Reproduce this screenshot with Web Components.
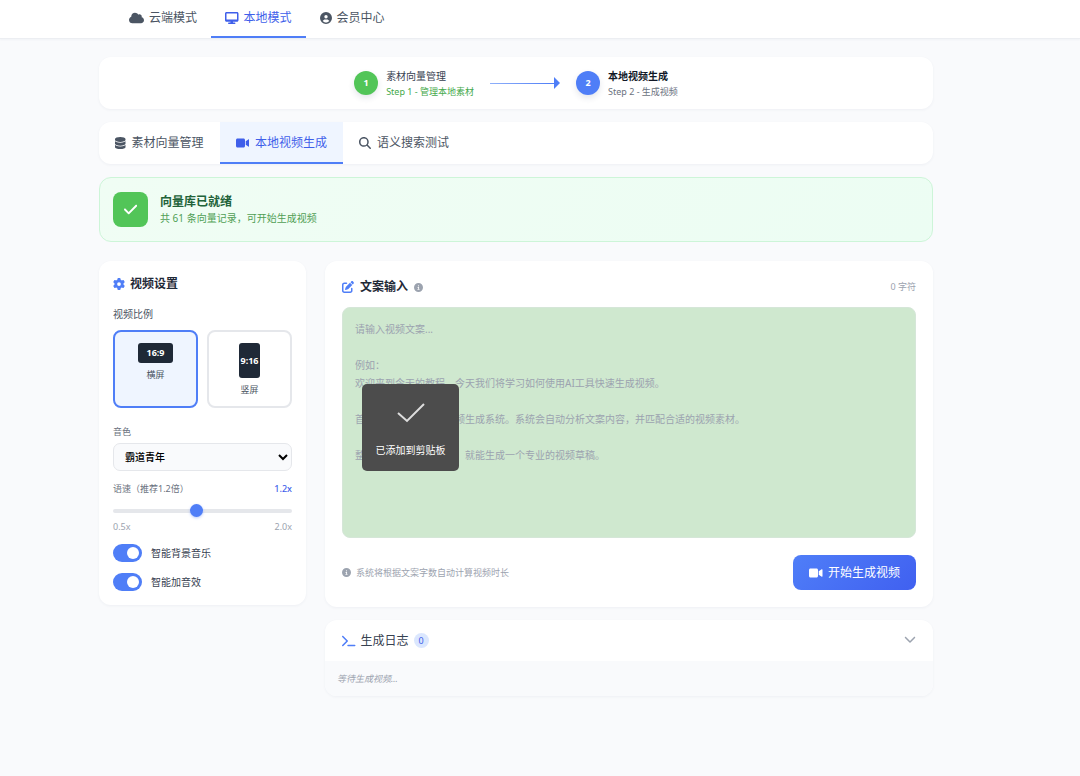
<!DOCTYPE html>
<html lang="zh-CN">
<head>
<meta charset="UTF-8">
<meta name="viewport" content="width=device-width, initial-scale=1.0">
<title>本地视频生成</title>
<style>
  :root {
    --blue: #4f7ef7;
    --blue-dark: #3f5fea;
    --green: #52c558;
    --ink: #1f2937;
    --text: #4b5563;
    --muted: #6b7280;
    --faint: #9ca3af;
    --line: #e5e7eb;
    --soft: #f9fafc;
  }
  body {
    margin: 0;
    min-height: 100vh;
    background: var(--soft);
    color: var(--text);
    font-family: "Noto Sans", "Noto Sans CJK SC", sans-serif;
    font-size: 12px;
    line-height: 18px;
  }
  main {
    display: flex;
    flex-direction: column;
    gap: 13px;
    padding: 18px 147px 40px 99px;
  }
  .workspace {
    display: grid;
    grid-template-columns: 207px 1fr;
    gap: 19px;
    align-items: start;
    margin-top: 6px;
  }
  .column {
    display: flex;
    flex-direction: column;
    gap: 13px;
  }
</style>
</head>
<body>
<top-nav>
  <nav-link icon="cloud">云端模式</nav-link>
  <nav-link icon="desktop" active>本地模式</nav-link>
  <nav-link icon="user">会员中心</nav-link>
</top-nav>

<main>
  <step-flow>
    <step-item number="1" state="done" note="Step 1 - 管理本地素材">素材向量管理</step-item>
    <step-arrow></step-arrow>
    <step-item number="2" state="current" note="Step 2 - 生成视频">本地视频生成</step-item>
  </step-flow>

  <tab-bar>
    <tab-button icon="database">素材向量管理</tab-button>
    <tab-button icon="video" active>本地视频生成</tab-button>
    <tab-button icon="search">语义搜索测试</tab-button>
  </tab-bar>

  <status-banner heading="向量库已就绪">共 61 条向量记录，可开始生成视频</status-banner>

  <div class="workspace">
    <video-settings></video-settings>
    <div class="column">
      <script-editor>
        <copy-toast slot="toast">已添加到剪贴板</copy-toast>
      </script-editor>
      <log-panel heading="生成日志" count="0">等待生成视频...</log-panel>
    </div>
  </div>
</main>

<script>
  const ICONS = {
    cloud: [640, 'M0 336c0 79.5 64.5 144 144 144H512c70.7 0 128-57.3 128-128c0-61.9-44-113.6-102.4-125.4c4.1-10.7 6.4-22.4 6.4-34.6c0-53-43-96-96-96c-19.7 0-38.1 6-53.3 16.2C367 64.2 315.3 32 256 32C167.6 32 96 103.6 96 192c0 2.7 .1 5.4 .2 8.1C40.2 219.8 0 273.2 0 336z'],
    desktop: [576, 'M64 0C28.7 0 0 28.7 0 64V352c0 35.3 28.7 64 64 64H240l-10.7 32H160c-17.7 0-32 14.3-32 32s14.3 32 32 32H416c17.7 0 32-14.3 32-32s-14.3-32-32-32H346.7L336 416H512c35.3 0 64-28.7 64-64V64c0-35.3-28.7-64-64-64H64zM512 64V320H64V64H512z'],
    user: [512, 'M399 384.2C376.9 345.8 335.4 320 288 320H224c-47.4 0-88.9 25.8-111 64.2c35.2 39.2 86.2 63.8 143 63.8s107.8-24.7 143-63.8zM0 256a256 256 0 1 1 512 0A256 256 0 1 1 0 256zm256 16a72 72 0 1 0 0-144 72 72 0 1 0 0 144z'],
    database: [448, 'M448 80v48c0 44.2-100.3 80-224 80S0 172.2 0 128V80C0 35.8 100.3 0 224 0S448 35.8 448 80zM393.2 214.7c20.8-7.4 39.9-16.9 54.8-28.6V288c0 44.2-100.3 80-224 80S0 332.2 0 288V186.1c14.9 11.8 34 21.2 54.8 28.6C99.7 230.7 159.5 240 224 240s124.3-9.3 169.2-25.3zM0 346.1c14.9 11.8 34 21.2 54.8 28.6C99.7 390.7 159.5 400 224 400s124.3-9.3 169.2-25.3c20.8-7.4 39.9-16.9 54.8-28.6V432c0 44.2-100.3 80-224 80S0 476.2 0 432V346.1z'],
    video: [576, 'M0 128C0 92.7 28.7 64 64 64H320c35.3 0 64 28.7 64 64V384c0 35.3-28.7 64-64 64H64c-35.3 0-64-28.7-64-64V128zM559.1 99.8c10.4 5.6 16.9 16.4 16.9 28.2V384c0 11.8-6.5 22.6-16.9 28.2s-23 5-32.9-1.6l-96-64L416 337.1V320 192 174.9l14.2-9.5 96-64c9.8-6.5 22.4-7.2 32.9-1.6z'],
    search: [512, 'M416 208c0 45.9-14.9 88.3-40 122.7L502.6 457.4c12.5 12.5 12.5 32.8 0 45.3s-32.8 12.5-45.3 0L330.7 376c-34.4 25.2-76.8 40-122.7 40C93.1 416 0 322.9 0 208S93.1 0 208 0S416 93.1 416 208zM208 352a144 144 0 1 0 0-288 144 144 0 1 0 0 288z'],
    check: [448, 'M438.6 105.4c12.5 12.5 12.5 32.8 0 45.3l-256 256c-12.5 12.5-32.8 12.5-45.3 0l-128-128c-12.5-12.5-12.5-32.8 0-45.3s32.8-12.5 45.3 0L160 338.7 393.4 105.4c12.5-12.5 32.8-12.5 45.3 0z'],
    gear: [512, 'M495.9 166.6c3.2 8.7 .5 18.4-6.4 24.6l-43.3 39.4c1.1 8.3 1.7 16.8 1.7 25.4s-.6 17.1-1.7 25.4l43.3 39.4c6.9 6.2 9.6 15.9 6.4 24.6c-4.4 11.9-9.7 23.3-15.8 34.3l-4.7 8.1c-6.6 11-14 21.4-22.1 31.2c-5.9 7.2-15.7 9.6-24.5 6.8l-55.7-17.7c-13.4 10.3-28.2 18.9-44 25.4l-12.5 57.1c-2 9.1-9 16.3-18.2 17.8c-13.8 2.3-28 3.5-42.5 3.5s-28.7-1.2-42.5-3.5c-9.2-1.5-16.2-8.7-18.2-17.8l-12.5-57.1c-15.8-6.5-30.6-15.1-44-25.4L83.1 425.9c-8.8 2.8-18.6 .3-24.5-6.8c-8.1-9.8-15.5-20.2-22.1-31.2l-4.7-8.1c-6.1-11-11.4-22.4-15.8-34.3c-3.2-8.7-.5-18.4 6.4-24.6l43.3-39.4C64.6 273.1 64 264.6 64 256s.6-17.1 1.7-25.4L22.4 191.2c-6.9-6.2-9.6-15.9-6.4-24.6c4.4-11.9 9.7-23.3 15.8-34.3l4.7-8.1c6.6-11 14-21.4 22.1-31.2c5.9-7.2 15.7-9.6 24.5-6.8l55.7 17.7c13.4-10.3 28.2-18.9 44-25.4l12.5-57.1c2-9.1 9-16.3 18.2-17.8C227.3 1.2 241.5 0 256 0s28.7 1.2 42.5 3.5c9.2 1.5 16.2 8.7 18.2 17.8l12.5 57.1c15.8 6.5 30.6 15.1 44 25.4l55.7-17.7c8.8-2.8 18.6-.3 24.5 6.8c8.1 9.8 15.5 20.2 22.1 31.2l4.7 8.1c6.1 11 11.4 22.4 15.8 34.3zM256 336a80 80 0 1 0 0-160 80 80 0 1 0 0 160z'],
    edit: [512, 'M471.6 21.7c-21.9-21.9-57.3-21.9-79.2 0L362.3 51.7l97.9 97.9 30.1-30.1c21.9-21.9 21.9-57.3 0-79.2L471.6 21.7zm-299.2 220c-6.1 6.1-10.8 13.6-13.5 21.9l-29.6 88.8c-2.9 8.6-.6 18.1 5.8 24.6s15.9 8.7 24.6 5.8l88.8-29.6c8.2-2.7 15.7-7.4 21.9-13.5L437.7 172.3 339.7 74.3 172.4 241.7zM96 64C43 64 0 107 0 160V416c0 53 43 96 96 96H352c53 0 96-43 96-96V320c0-17.7-14.3-32-32-32s-32 14.3-32 32v96c0 17.7-14.3 32-32 32H96c-17.7 0-32-14.3-32-32V160c0-17.7 14.3-32 32-32h96c17.7 0 32-14.3 32-32s-14.3-32-32-32H96z'],
    info: [512, 'M256 512A256 256 0 1 0 256 0a256 256 0 1 0 0 512zM216 336h24V272H216c-13.3 0-24-10.7-24-24s10.7-24 24-24h48c13.3 0 24 10.7 24 24v88h8c13.3 0 24 10.7 24 24s-10.7 24-24 24H216c-13.3 0-24-10.7-24-24s10.7-24 24-24zm40-208a32 32 0 1 1 0 64 32 32 0 1 1 0-64z'],
    terminal: [576, 'M9.4 86.6C-3.1 74.1-3.1 53.9 9.4 41.4s32.8-12.5 45.3 0l192 192c12.5 12.5 12.5 32.8 0 45.3l-192 192c-12.5 12.5-32.8 12.5-45.3 0s-12.5-32.8 0-45.3L178.7 256 9.4 86.6zM256 416H544c17.7 0 32 14.3 32 32s-14.3 32-32 32H256c-17.7 0-32-14.3-32-32s14.3-32 32-32z'],
    chevron: [512, 'M233.4 406.6c12.5 12.5 32.8 12.5 45.3 0l192-192c12.5-12.5 12.5-32.8 0-45.3s-32.8-12.5-45.3 0L256 338.7 86.6 169.4c-12.5-12.5-32.8-12.5-45.3 0s-12.5 32.8 0 45.3l192 192z']
  };

  // Shared white card look
  const CARD = `
    display: block;
    background: #fff;
    border-radius: 12px;
    box-shadow: 0 1px 3px rgba(30, 50, 90, 0.05);
  `;

  class BaseElement extends HTMLElement {
    constructor() {
      super();
      this.attachShadow({ mode: 'open' });
    }

    connectedCallback() {
      this.shadowRoot.innerHTML = this.render();
    }
  }

  class AppIcon extends BaseElement {
    render() {
      const [width, path] = ICONS[this.getAttribute('name')];
      return `
        <style>
          :host { display: inline-flex; flex: none; }
          svg { display: block; height: var(--icon-size, 12px); width: auto; fill: currentColor; }
        </style>
        <svg viewBox="0 0 ${width} 512" aria-hidden="true"><path d="${path}"/></svg>
      `;
    }
  }

  class TopNav extends BaseElement {
    render() {
      return `
        <style>
          :host {
            display: block;
            background: #fff;
            border-bottom: 1px solid #eceef2;
            box-shadow: 0 1px 2px rgba(30, 50, 90, 0.04);
          }
          nav { display: flex; padding: 0 115px; }
        </style>
        <nav><slot></slot></nav>
      `;
    }
  }

  class NavLink extends BaseElement {
    render() {
      return `
        <style>
          :host { display: block; }
          a {
            display: flex;
            align-items: center;
            gap: 5px;
            height: 36px;
            padding: 0 14px;
            border-bottom: 2px solid transparent;
            color: var(--text);
            text-decoration: none;
          }
          :host([active]) a { color: var(--blue-dark); border-color: var(--blue); }
        </style>
        <a href="#"><app-icon name="${this.getAttribute('icon')}"></app-icon><slot></slot></a>
      `;
    }
  }

  class StepFlow extends BaseElement {
    render() {
      return `
        <style>
          :host { ${CARD} }
          div {
            display: flex;
            justify-content: center;
            align-items: center;
            gap: 16px;
            padding: 10px;
          }
        </style>
        <div><slot></slot></div>
      `;
    }
  }

  class StepItem extends BaseElement {
    render() {
      return `
        <style>
          :host { display: flex; align-items: center; gap: 8px; }
          .circle {
            width: 24px;
            height: 24px;
            border-radius: 50%;
            background: var(--blue);
            box-shadow: 0 3px 6px rgba(30, 50, 90, 0.12);
            color: #fff;
            font-size: 9px;
            font-weight: 700;
            line-height: 24px;
            text-align: center;
          }
          .words { padding-top: 2px; }
          .title { color: #374151; font-size: 10px; line-height: 15px; }
          .note { color: var(--muted); font-size: 9px; line-height: 15px; }
          :host([state="done"]) .circle { background: var(--green); }
          :host([state="done"]) .note { color: #45a94b; }
          :host([state="current"]) .title { color: #111827; font-weight: 700; }
        </style>
        <div class="circle">${this.getAttribute('number')}</div>
        <div class="words">
          <div class="title"><slot></slot></div>
          <div class="note">${this.getAttribute('note')}</div>
        </div>
      `;
    }
  }

  class StepArrow extends BaseElement {
    render() {
      return `
        <style>
          :host { display: flex; align-items: center; width: 70px; }
          .line { flex: 1; height: 1px; background: linear-gradient(90deg, #8fb0fa, var(--blue)); }
          .head {
            border: 6px solid transparent;
            border-left-color: var(--blue);
            border-right-width: 0;
          }
        </style>
        <div class="line"></div>
        <div class="head"></div>
      `;
    }
  }

  class TabBar extends BaseElement {
    render() {
      return `
        <style>
          :host { ${CARD} overflow: hidden; }
          div { display: flex; }
        </style>
        <div><slot></slot></div>
      `;
    }
  }

  class TabButton extends BaseElement {
    render() {
      return `
        <style>
          :host { display: block; }
          button {
            display: flex;
            align-items: center;
            gap: 6px;
            height: 42px;
            padding: 2px 16px 0;
            border: 0;
            border-bottom: 2px solid transparent;
            background: none;
            color: var(--text);
            font: inherit;
          }
          :host([active]) button {
            background: #eff5ff;
            border-color: var(--blue);
            color: var(--blue-dark);
          }
        </style>
        <button type="button"><app-icon name="${this.getAttribute('icon')}"></app-icon><slot></slot></button>
      `;
    }
  }

  class StatusBanner extends BaseElement {
    render() {
      return `
        <style>
          :host {
            display: flex;
            align-items: center;
            gap: 12px;
            padding: 14px 13px;
            border: 1px solid #cdf5d8;
            border-radius: 12px;
            background: linear-gradient(135deg, #f0fdf4, #ecfdf3);
          }
          .badge {
            display: grid;
            place-items: center;
            width: 35px;
            height: 35px;
            border-radius: 8px;
            background: var(--green);
            color: #fff;
            --icon-size: 15px;
          }
          .heading { color: #22633a; font-weight: 700; line-height: 16px; }
          .note { color: #4f9f55; font-size: 10px; line-height: 16px; }
        </style>
        <div class="badge"><app-icon name="check"></app-icon></div>
        <div>
          <div class="heading">${this.getAttribute('heading')}</div>
          <div class="note"><slot></slot></div>
        </div>
      `;
    }
  }

  class RatioOption extends BaseElement {
    render() {
      const checked = this.hasAttribute('checked') ? 'checked' : '';
      return `
        <style>
          :host { display: block; }
          label {
            display: flex;
            flex-direction: column;
            align-items: center;
            gap: 5px;
            box-sizing: border-box;
            height: 100%;
            padding: 11px 0 9px;
            border: 2px solid var(--line);
            border-radius: 8px;
            background: #fff;
            font-size: 9px;
            line-height: 14px;
          }
          label:has(:checked) { border-color: var(--blue); background: #eff5ff; }
          input { position: absolute; opacity: 0; pointer-events: none; }
          .preview {
            display: grid;
            place-items: center;
            width: 35px;
            height: 20px;
            border-radius: 3px;
            background: var(--ink);
            color: #fff;
            font-weight: 700;
          }
          :host([shape="tall"]) .preview { width: 21px; height: 35px; }
        </style>
        <label>
          <input type="radio" name="ratio" ${checked}>
          <span class="preview">${this.getAttribute('ratio')}</span>
          <slot></slot>
        </label>
      `;
    }
  }

  class SpeedSlider extends BaseElement {
    render() {
      return `
        <style>
          :host { display: block; color: var(--muted); font-size: 9px; line-height: 16px; }
          .row { display: flex; justify-content: space-between; }
          output { color: var(--blue-dark); font-weight: 500; }
          input {
            display: block;
            width: 100%;
            height: 14px;
            margin: 7px 0 2px;
            appearance: none;
            background: none;
          }
          input::-webkit-slider-runnable-track {
            height: 4px;
            border-radius: 2px;
            background: var(--line);
          }
          input::-webkit-slider-thumb {
            appearance: none;
            width: 13px;
            height: 13px;
            margin-top: -5px;
            border-radius: 50%;
            background: var(--blue);
            box-shadow: 0 1px 3px rgba(79, 126, 247, 0.4);
          }
          .scale { color: var(--faint); line-height: 14px; }
        </style>
        <div class="row">
          <label for="speed"><slot></slot></label>
          <output for="speed">1.2x</output>
        </div>
        <input id="speed" type="range" min="0.5" max="2" step="0.1" value="1.2">
        <div class="row scale"><span>0.5x</span><span>2.0x</span></div>
      `;
    }
  }

  class SettingSwitch extends BaseElement {
    render() {
      return `
        <style>
          :host { display: block; }
          label {
            display: flex;
            align-items: center;
            gap: 9px;
            color: #374151;
            font-size: 10px;
          }
          input {
            appearance: none;
            display: flex;
            align-items: center;
            box-sizing: border-box;
            width: 29px;
            height: 18px;
            margin: 0;
            padding: 3px;
            border-radius: 9px;
            background: #d1d5db;
          }
          input::before {
            content: "";
            width: 12px;
            height: 12px;
            border-radius: 50%;
            background: #fff;
          }
          input:checked { justify-content: flex-end; background: var(--blue); }
        </style>
        <label><input type="checkbox" checked><slot></slot></label>
      `;
    }
  }

  class VideoSettings extends BaseElement {
    render() {
      return `
        <style>
          :host { ${CARD} padding: 14px; }
          h2 {
            display: flex;
            align-items: center;
            gap: 5px;
            margin: 0 0 13px;
            color: var(--ink);
            font-size: 12px;
          }
          h2 app-icon { color: var(--blue); }
          .label { display: block; line-height: 16px; }
          .ratio-label { margin-bottom: 8px; font-size: 10px; }
          .voice-label { margin-bottom: 3px; font-size: 9px; color: var(--muted); }
          .ratios {
            display: grid;
            grid-template-columns: 1fr 1fr;
            gap: 9px;
            margin-bottom: 16px;
          }
          select {
            display: block;
            width: 100%;
            height: 28px;
            margin-bottom: 10px;
            padding: 0 0 0 7px;
            border: 1px solid var(--line);
            border-radius: 7px;
            background-color: var(--soft);
            color: #000;
            font-family: inherit;
            font-size: 10px;
            font-weight: 500;
          }
          .switches {
            display: flex;
            flex-direction: column;
            gap: 11px;
            margin-top: 10px;
          }
        </style>
        <h2><app-icon name="gear"></app-icon>视频设置</h2>
        <div class="label ratio-label">视频比例</div>
        <div class="ratios">
          <ratio-option ratio="16:9" checked>横屏</ratio-option>
          <ratio-option ratio="9:16" shape="tall">竖屏</ratio-option>
        </div>
        <label class="label voice-label" for="voice">音色</label>
        <select id="voice"><option>霸道青年</option></select>
        <speed-slider>语速（推荐1.2倍）</speed-slider>
        <div class="switches">
          <setting-switch>智能背景音乐</setting-switch>
          <setting-switch>智能加音效</setting-switch>
        </div>
      `;
    }
  }

  class ScriptEditor extends BaseElement {
    render() {
      const placeholder = [
        '请输入视频文案...',
        '',
        '例如：',
        '欢迎来到今天的教程。今天我们将学习如何使用AI工具快速生成视频。',
        '',
        '首先，我们需要打开视频生成系统。系统会自动分析文案内容，并匹配合适的视频素材。',
        '',
        '整个过程只需要几分钟，就能生成一个专业的视频草稿。'
      ].join('&#10;');
      return `
        <style>
          :host { ${CARD} padding: 17px; }
          header, footer { display: flex; align-items: center; justify-content: space-between; }
          header { margin-bottom: 11px; }
          .title { display: flex; align-items: center; gap: 6px; color: var(--ink); font-weight: 700; }
          .title .edit { color: var(--blue); }
          .info { color: var(--faint); --icon-size: 9px; }
          .count, .hint { color: var(--faint); font-size: 9px; }
          .field { position: relative; margin-bottom: 17px; }
          textarea {
            display: block;
            box-sizing: border-box;
            width: 100%;
            height: 231px;
            padding: 12px;
            border: 1px solid #d5e6d8;
            border-radius: 8px;
            background: #cfe8cf;
            color: var(--ink);
            font-family: inherit;
            font-size: 10px;
            line-height: 18px;
            resize: none;
          }
          textarea::placeholder { color: var(--faint); }
          .hint { display: flex; align-items: center; gap: 5px; --icon-size: 9px; }
          button {
            display: flex;
            align-items: center;
            gap: 5px;
            height: 35px;
            padding: 0 16px;
            border: 0;
            border-radius: 8px;
            background: linear-gradient(135deg, #4f7ef8, #4060f0);
            color: #fff;
            font: inherit;
          }
        </style>
        <header>
          <label class="title" for="script">
            <app-icon class="edit" name="edit"></app-icon>文案输入
            <app-icon class="info" name="info"></app-icon>
          </label>
          <span class="count">0 字符</span>
        </header>
        <div class="field">
          <textarea id="script" placeholder="${placeholder}"></textarea>
          <slot name="toast"></slot>
        </div>
        <footer>
          <span class="hint"><app-icon name="info"></app-icon>系统将根据文案字数自动计算视频时长</span>
          <button type="button"><app-icon name="video"></app-icon>开始生成视频</button>
        </footer>
      `;
    }
  }

  class CopyToast extends BaseElement {
    render() {
      return `
        <style>
          :host {
            position: absolute;
            top: 77px;
            left: 20px;
            display: flex;
            flex-direction: column;
            align-items: center;
            gap: 18px;
            box-sizing: border-box;
            width: 97px;
            height: 87px;
            padding-top: 19px;
            border-radius: 5px;
            background: #4c4c4c;
            color: #fff;
            font-size: 10px;
          }
          svg { fill: none; stroke: #ddd; stroke-width: 2; }
        </style>
        <svg width="28" height="20" viewBox="0 0 28 20" aria-hidden="true"><path d="M1 10l9 8L27 1"/></svg>
        <slot></slot>
      `;
    }
  }

  class LogPanel extends BaseElement {
    render() {
      return `
        <style>
          :host { ${CARD} overflow: hidden; }
          header { display: flex; align-items: center; gap: 5px; height: 41px; padding: 0 17px; }
          .terminal { color: var(--blue); }
          .heading { color: #374151; }
          .count {
            min-width: 15px;
            border-radius: 8px;
            background: #dbe7fe;
            color: var(--blue-dark);
            font-size: 9px;
            line-height: 15px;
            text-align: center;
          }
          button {
            margin-left: auto;
            padding: 0;
            border: 0;
            background: none;
            color: var(--faint);
          }
          .body {
            padding: 9px 12px 8px;
            background: var(--soft);
            color: var(--faint);
            font-size: 9px;
            font-style: italic;
          }
        </style>
        <header>
          <app-icon class="terminal" name="terminal"></app-icon>
          <span class="heading">${this.getAttribute('heading')}</span>
          <span class="count">${this.getAttribute('count')}</span>
          <button type="button" aria-label="展开"><app-icon name="chevron"></app-icon></button>
        </header>
        <div class="body"><slot></slot></div>
      `;
    }
  }

  customElements.define('app-icon', AppIcon);
  customElements.define('top-nav', TopNav);
  customElements.define('nav-link', NavLink);
  customElements.define('step-flow', StepFlow);
  customElements.define('step-item', StepItem);
  customElements.define('step-arrow', StepArrow);
  customElements.define('tab-bar', TabBar);
  customElements.define('tab-button', TabButton);
  customElements.define('status-banner', StatusBanner);
  customElements.define('ratio-option', RatioOption);
  customElements.define('speed-slider', SpeedSlider);
  customElements.define('setting-switch', SettingSwitch);
  customElements.define('video-settings', VideoSettings);
  customElements.define('script-editor', ScriptEditor);
  customElements.define('copy-toast', CopyToast);
  customElements.define('log-panel', LogPanel);
</script>
</body>
</html>
